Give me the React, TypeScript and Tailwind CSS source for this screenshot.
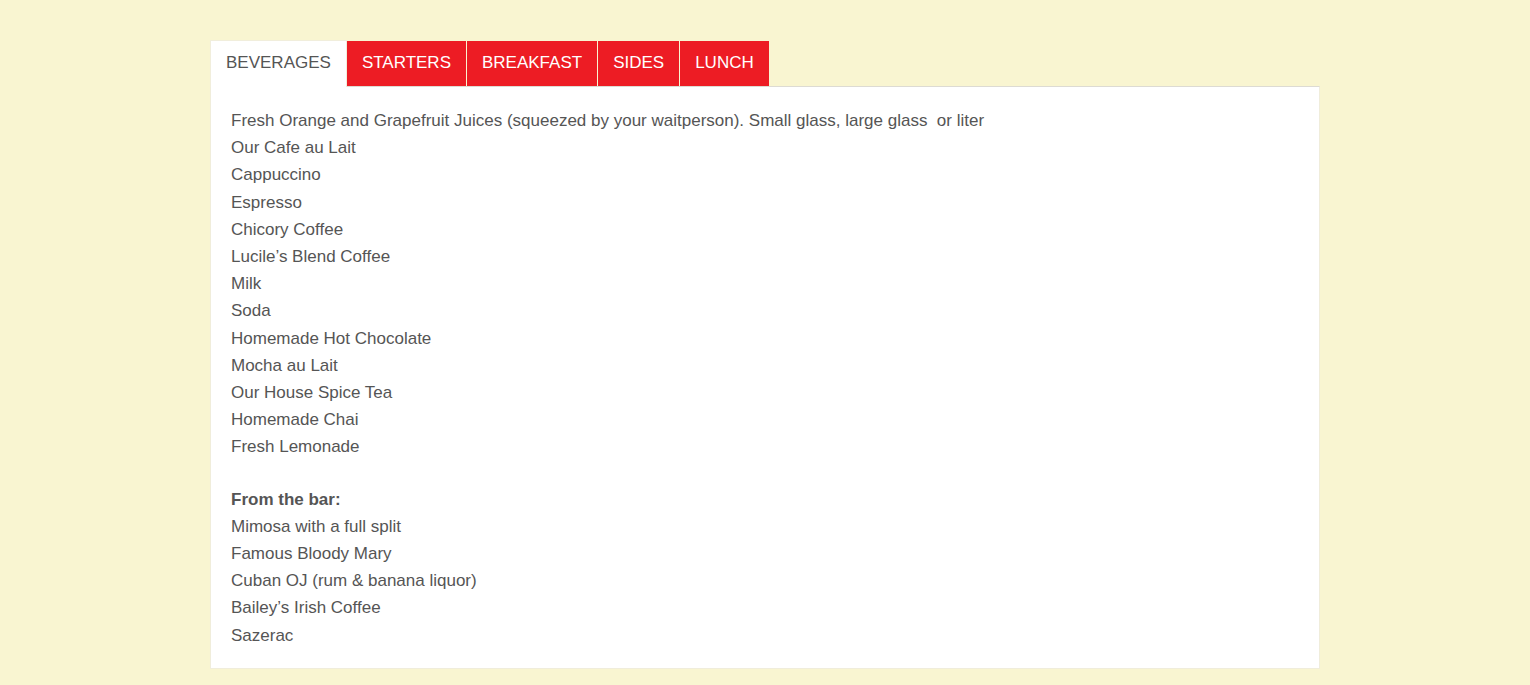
const tabs = ["BEVERAGES", "STARTERS", "BREAKFAST", "SIDES", "LUNCH"];

const drinks = [
  "Fresh Orange and Grapefruit Juices (squeezed by your waitperson). Small glass, large glass\u00a0 or liter",
  "Our Cafe au Lait",
  "Cappuccino",
  "Espresso",
  "Chicory Coffee",
  "Lucile’s Blend Coffee",
  "Milk",
  "Soda",
  "Homemade Hot Chocolate",
  "Mocha au Lait",
  "Our House Spice Tea",
  "Homemade Chai",
  "Fresh Lemonade",
];

const bar = [
  "Mimosa with a full split",
  "Famous Bloody Mary",
  "Cuban OJ (rum & banana liquor)",
  "Bailey’s Irish Coffee",
  "Sazerac",
];

export default function App() {
  return (
    <div className="min-h-[685px] bg-[#f9f5d1] pt-[40px] font-['Liberation_Sans',Arial,sans-serif] text-[17px] text-[#555]">
      <div className="mx-auto w-[1110px]">
        <div className="flex">
          {tabs.map((t, i) =>
            i === 0 ? (
              <div
                key={t}
                className="-mb-px border border-b-0 border-[#f1eedc] bg-white px-[15px] pb-[13px] pt-[12px] leading-[19px] text-[#555]"
              >
                {t}
              </div>
            ) : (
              <div
                key={t}
                className={`${i === 1 ? "" : "ml-px"} mt-px bg-[#ed1c24] px-[15px] pb-[13px] pt-[11px] leading-[21px] text-white`}
              >
                {t}
              </div>
            )
          )}
        </div>
        <div className="border border-[#f0eddb] border-t-[#dddbd3] bg-white px-[20px] pb-[19px] pt-[20px] leading-[27.2px]">
          <div className="mb-[25px]">
            {drinks.map((d) => (
              <div key={d}>{d}</div>
            ))}
          </div>
          <div className="font-bold">From the bar:</div>
          {bar.map((d) => (
            <div key={d}>{d}</div>
          ))}
        </div>
      </div>
    </div>
  );
}
